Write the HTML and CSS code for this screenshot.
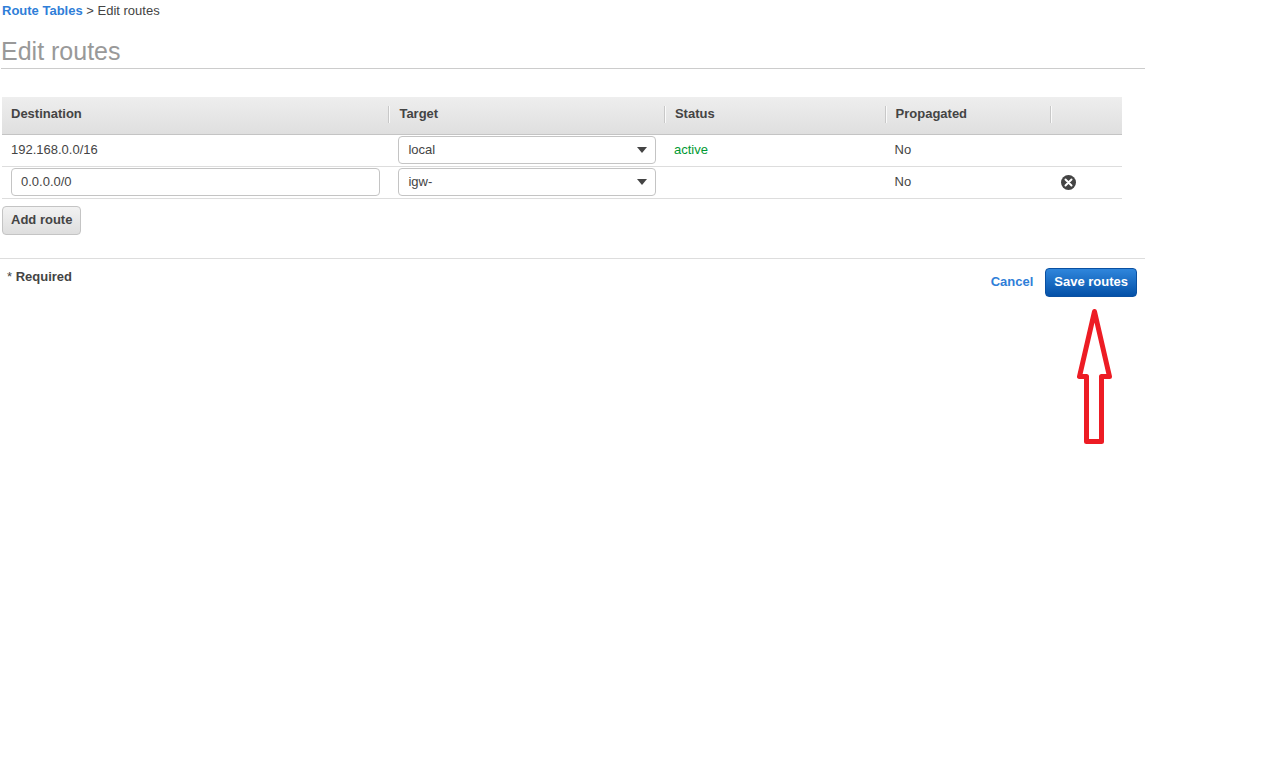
FILE: index.html
```html
<!DOCTYPE html>
<html lang="en">
<head>
<meta charset="utf-8">
<title>Edit routes</title>
<link rel="stylesheet" href="styles.css">
</head>
<body>
<main class="page">
  <nav class="breadcrumb"><a class="breadcrumb-link" href="#">Route Tables</a> &gt; Edit routes</nav>
  <h1 class="title">Edit routes</h1>
  <form class="routes-form">
    <div class="routes-area">
      <table class="routes">
        <colgroup>
          <col class="col-destination">
          <col class="col-target">
          <col class="col-status">
          <col class="col-propagated">
          <col class="col-remove">
        </colgroup>
        <thead>
          <tr>
            <th scope="col">Destination</th>
            <th scope="col">Target</th>
            <th scope="col">Status</th>
            <th scope="col">Propagated</th>
            <th></th>
          </tr>
        </thead>
        <tbody>
          <tr>
            <td>192.168.0.0/16</td>
            <td><div class="select-box"><select class="field" aria-label="Target for 192.168.0.0/16"><option>local</option></select></div></td>
            <td class="active">active</td>
            <td>No</td>
            <td></td>
          </tr>
          <tr>
            <td><input class="field" type="text" value="0.0.0.0/0" aria-label="Destination"></td>
            <td><div class="select-box"><select class="field" aria-label="Target for 0.0.0.0/0"><option>igw-</option></select></div></td>
            <td></td>
            <td>No</td>
            <td>
              <button class="remove" type="button" aria-label="Remove route">
                <svg class="remove-icon" viewBox="0 0 16 16" aria-hidden="true">
                  <circle cx="8.5" cy="7.5" r="7.5" fill="#444"/>
                  <path d="M5.5 4.500l6 6M11.500 4.500l-6 6" stroke="#fff" stroke-width="2" stroke-linecap="round"/>
                </svg>
              </button>
            </td>
          </tr>
        </tbody>
      </table>
      <button class="button" type="button">Add route</button>
    </div>
    <footer class="footer">
      <p class="required"><span class="star">*</span> Required</p>
      <div class="actions">
        <a class="cancel" href="#">Cancel</a>
        <div class="save">
          <button class="button button-primary" type="button">Save routes</button>
          <svg class="arrow-up" width="38" height="137" viewBox="0 0 38 137" aria-hidden="true">
            <path d="M18.5 3.5 L3.5 68.5 L10.5 68.5 L10.5 133.5 L25.5 133.5 L25.5 68.5 L33.5 68.5 Z" fill="none" stroke="#ed1c24" stroke-width="5" stroke-linejoin="round"/>
          </svg>
        </div>
      </div>
    </footer>
  </form>
</main>
</body>
</html>
```
FILE: styles.css
```css
* {
  box-sizing: border-box;
}

body {
  margin: 0;
  background: #fff;
  color: #444;
  font: 13px/20px "Liberation Sans", Arial, sans-serif;
}

a {
  color: #2f7ed8;
  text-decoration: none;
}

.page {
  min-height: 100vh;
  margin-right: 128px;
}

.breadcrumb {
  padding: 1px 0 0 2px;
}

.breadcrumb-link {
  font-weight: bold;
}

.title {
  margin: 13px 0 28px 1px;
  border-bottom: 1px solid #ccc;
  color: #999;
  font-size: 25px;
  font-weight: normal;
  line-height: 34px;
}

.routes-area {
  padding: 0 23px 23px 2px;
}

.routes {
  width: 100%;
  margin-bottom: 7px;
  border-collapse: separate;
  border-spacing: 0;
  table-layout: fixed;
}

.col-destination { width: 34.5%; }
.col-target { width: 24.6%; }
.col-status { width: 19.7%; }
.col-propagated { width: 14.8%; }
.col-remove { width: 6.4%; }

.routes th {
  height: 38px;
  padding: 0 8px 4px 11px;
  border-bottom: 1px solid #c4c4c4;
  background: linear-gradient(#eee, #dfdfdf);
  text-align: left;
}

.routes th + th {
  background:
    linear-gradient(90deg, #c8c8c8 1px, #fafafa 1px) 0 9px / 2px 17px no-repeat,
    linear-gradient(#eee, #dfdfdf);
}

.routes td {
  height: 32px;
  padding: 1px 8px 2px 10px;
  border-bottom: 1px solid #ddd;
}

.routes th:first-child,
.routes td:first-child {
  padding-left: 9px;
}

.routes .active {
  color: #093;
}

.field {
  display: block;
  width: 100%;
  height: 28px;
  padding: 0 9px 2px;
  border: 1px solid #c4c4c4;
  border-radius: 4px;
  background: #fff;
  color: #444;
  font: inherit;
  appearance: none;
}

.select-box {
  position: relative;
}

.select-box .field {
  padding-bottom: 0;
}

.select-box::after {
  content: "";
  position: absolute;
  top: 11px;
  right: 9px;
  border: 5px solid transparent;
  border-top: 6px solid #444;
  border-bottom-width: 0;
  pointer-events: none;
}

.remove {
  display: block;
  margin-top: 2px;
  padding: 0;
  border: 0;
  background: none;
}

.remove-icon {
  display: block;
  width: 16px;
  height: 16px;
}

.button {
  display: block;
  height: 29px;
  padding: 0 8px 2px;
  border: 1px solid #c4c4c4;
  border-radius: 4px;
  background: linear-gradient(#f2f2f2, #dedede);
  color: #444;
  font: inherit;
  font-weight: bold;
}

.button-primary {
  border-color: #0a50a1;
  background: linear-gradient(#2f86dc, #0451a8);
  color: #fff;
}

.footer {
  display: flex;
  justify-content: space-between;
  align-items: flex-start;
  padding: 9px 8px 0 7px;
  border-top: 1px solid #ddd;
}

.required {
  margin: 0;
  font-weight: bold;
  line-height: 18px;
}

.star {
  font-weight: normal;
}

.actions {
  display: flex;
  gap: 12px;
}

.cancel {
  font-weight: bold;
  line-height: 27px;
}

.save {
  display: flex;
  flex-direction: column;
  align-items: flex-end;
}

.arrow-up {
  margin: 11px 23px 0 0;
}
```
